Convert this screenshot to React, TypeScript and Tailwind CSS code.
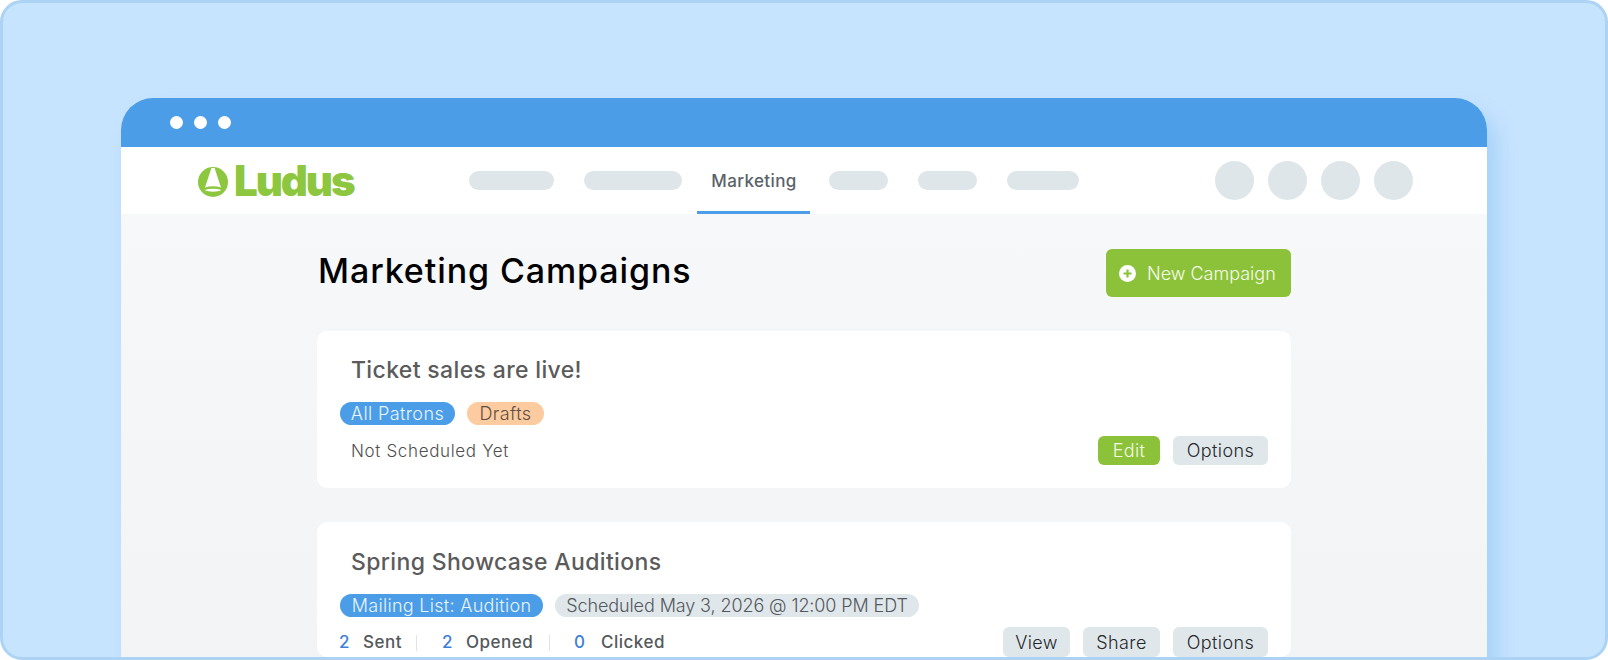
const navPills = ['w-[85px]', 'w-[98px]']
const navPillsAfter = ['w-[59px]', 'w-[59px]', 'w-[72px]']

const font = { fontFamily: 'Inter, "Open Sans", sans-serif' }

function Logo() {
  return (
    <div className="flex items-center gap-[6px] text-[#8dc63f]">
      <svg width="30" height="30" viewBox="0 0 30 30" className="mt-[1px]">
        <circle cx="15" cy="15" r="15" fill="#8dc63f" />
        <path d="M13.400 1h3.200L23 20.500c-5-1.700-11-1.700-16 0z" fill="#fff" />
        <path d="M6.500 23c5.500-1.700 11.500-1.700 17 0c-4 2.300-13 2.300-17 0z" fill="#fff" />
      </svg>
      <span className="text-[42px] leading-[34px] font-black tracking-[-0.05em]">Ludus</span>
    </div>
  )
}

function Pill({ className, children }: { className: string; children: React.ReactNode }) {
  return (
    <span className={`h-[23px] flex items-center justify-center rounded-full text-[18px] font-light ${className}`}>
      {children}
    </span>
  )
}

function Btn({ w, green, children }: { w: string; green?: boolean; children: React.ReactNode }) {
  const color = green ? 'bg-[#8cc239] text-[#f3f9e6]' : 'bg-[#e0e7eb] text-[#26292c]'
  return (
    <button className={`h-full flex items-center justify-center rounded-[6px] text-[18px] font-light tracking-[0.4px] ${w} ${color}`}>
      {children}
    </button>
  )
}

export default function App() {
  return (
    <div style={font} className="h-[660px] w-[1608px] overflow-hidden rounded-[22px] border-[3px] border-[#acd3f4] bg-[#c7e4fe] px-[118px] pt-[95px]">
      <div className="flex h-[600px] flex-col overflow-hidden rounded-t-[32px] bg-linear-to-b from-[#f7f9fa] to-[#f1f3f5] shadow-[10px_14px_20px_rgba(74,157,230,0.26)]">
        <div className="flex h-[49px] shrink-0 items-center gap-[11px] bg-[#4a9de6] pb-[1px] pl-[49px]">
          <span className="h-[13px] w-[13px] rounded-full bg-white" />
          <span className="h-[13px] w-[13px] rounded-full bg-white" />
          <span className="h-[13px] w-[13px] rounded-full bg-white" />
        </div>

        <div className="flex h-[67px] shrink-0 items-center bg-white pl-[77px]">
          <div className="mt-[1px] w-[271px]">
            <Logo />
          </div>
          <div className="flex h-full items-center">
            {navPills.map((w, i) => (
              <span key={i} className={`mb-[1px] mr-[30px] h-[19px] rounded-full bg-[#dfe6e9] ${w}`} />
            ))}
            <div className="mr-[19px] -ml-[15px] flex h-full w-[113px] items-center justify-center border-b-[3px] border-[#4a9de6] pl-[1px] pt-[6px] text-[17px] font-medium tracking-[0.4px] text-[#5a6269]">
              Marketing
            </div>
            {navPillsAfter.map((w, i) => (
              <span key={i} className={`mb-[1px] mr-[30px] h-[19px] rounded-full bg-[#dfe6e9] ${w}`} />
            ))}
          </div>
          <div className="mb-[1px] ml-[106px] flex gap-[14px]">
            {[0, 1, 2, 3].map(i => (
              <span key={i} className="h-[39px] w-[39px] rounded-full bg-[#dfe6ea]" />
            ))}
          </div>
        </div>

        <div className="ml-[195px] w-[975px] pt-[35px]">
          <div className="mb-[34px] flex h-[48px] items-center justify-between pl-[2px]">
            <h1 className="mb-[5px] text-[34px] font-medium leading-none tracking-[0.9px] text-black">Marketing Campaigns</h1>
            <button className="flex h-full w-[185px] items-center gap-[11px] rounded-[6px] bg-[#8cc239] pl-[13px] pt-[1px] text-[18px] font-light text-[#f6fbec]">
              <svg width="17" height="17" viewBox="0 0 17 17">
                <circle cx="8.500" cy="8.500" r="8.500" fill="#fff" />
                <path d="M8.500 4.500v8M4.500 8.500h8" stroke="#8cc239" strokeWidth="2.200" />
              </svg>
              New Campaign
            </button>
          </div>

          <div className="mb-[34px] ml-[1px] rounded-[10px] bg-white px-[23px] pb-[23px] pt-[24px]">
            <div className="ml-[11px] text-[23px] font-medium leading-[30px] tracking-[0.35px] text-[#5b5b5b]">Ticket sales are live!</div>
            <div className="mt-[17px] flex gap-[12px]">
              <Pill className="w-[115px] bg-[#4a9de6] tracking-[0.4px] text-[#e9f4fd]">All Patrons</Pill>
              <Pill className="w-[77px] bg-[#fdcba0] tracking-[0.4px] text-[#5f4f42]">Drafts</Pill>
            </div>
            <div className="mt-[11px] flex h-[29px] items-center justify-between">
              <span className="ml-[11px] mt-[2px] text-[17px] font-light tracking-[0.65px] text-[#4f4f4f]">Not Scheduled Yet</span>
              <div className="flex h-full gap-[13px]">
                <Btn w="w-[62px]" green>Edit</Btn>
                <Btn w="w-[95px]">Options</Btn>
              </div>
            </div>
          </div>

          <div className="ml-[1px] rounded-[10px] bg-white px-[23px] pt-[25px]">
            <div className="ml-[11px] text-[23px] font-medium leading-[30px] tracking-[0.35px] text-[#5b5b5b]">Spring Showcase Auditions</div>
            <div className="mt-[17px] flex gap-[12px]">
              <Pill className="w-[203px] bg-[#4a9de6] tracking-[0.3px] text-[#e9f4fd]">Mailing List: Audition</Pill>
              <Pill className="w-[364px] bg-[#e0e7eb] tracking-[-0.1px] text-[#53585c]">Scheduled May 3, 2026 @ 12:00 PM EDT</Pill>
            </div>
            <div className="mt-[10px] flex h-[30px] items-center justify-between">
              <div className="-ml-[1px] flex items-center pt-[2px] text-[17px] font-medium tracking-[0.5px] text-[#55595c]">
                <span className="w-[24px] text-[#3f7fd9]">2</span>
                <span className="w-[53px]">Sent</span>
                <span className="h-[16px] w-px bg-[#e0e4e6]" />
                <span className="ml-[25px] w-[24px] text-[#3f7fd9]">2</span>
                <span className="w-[83px]">Opened</span>
                <span className="h-[16px] w-px bg-[#e0e4e6]" />
                <span className="ml-[24px] w-[27px] text-[#3f7fd9]">0</span>
                <span>Clicked</span>
              </div>
              <div className="flex h-full gap-[13px]">
                <Btn w="w-[67px]">View</Btn>
                <Btn w="w-[77px]">Share</Btn>
                <Btn w="w-[95px]">Options</Btn>
              </div>
            </div>
          </div>
        </div>
      </div>
    </div>
  )
}
